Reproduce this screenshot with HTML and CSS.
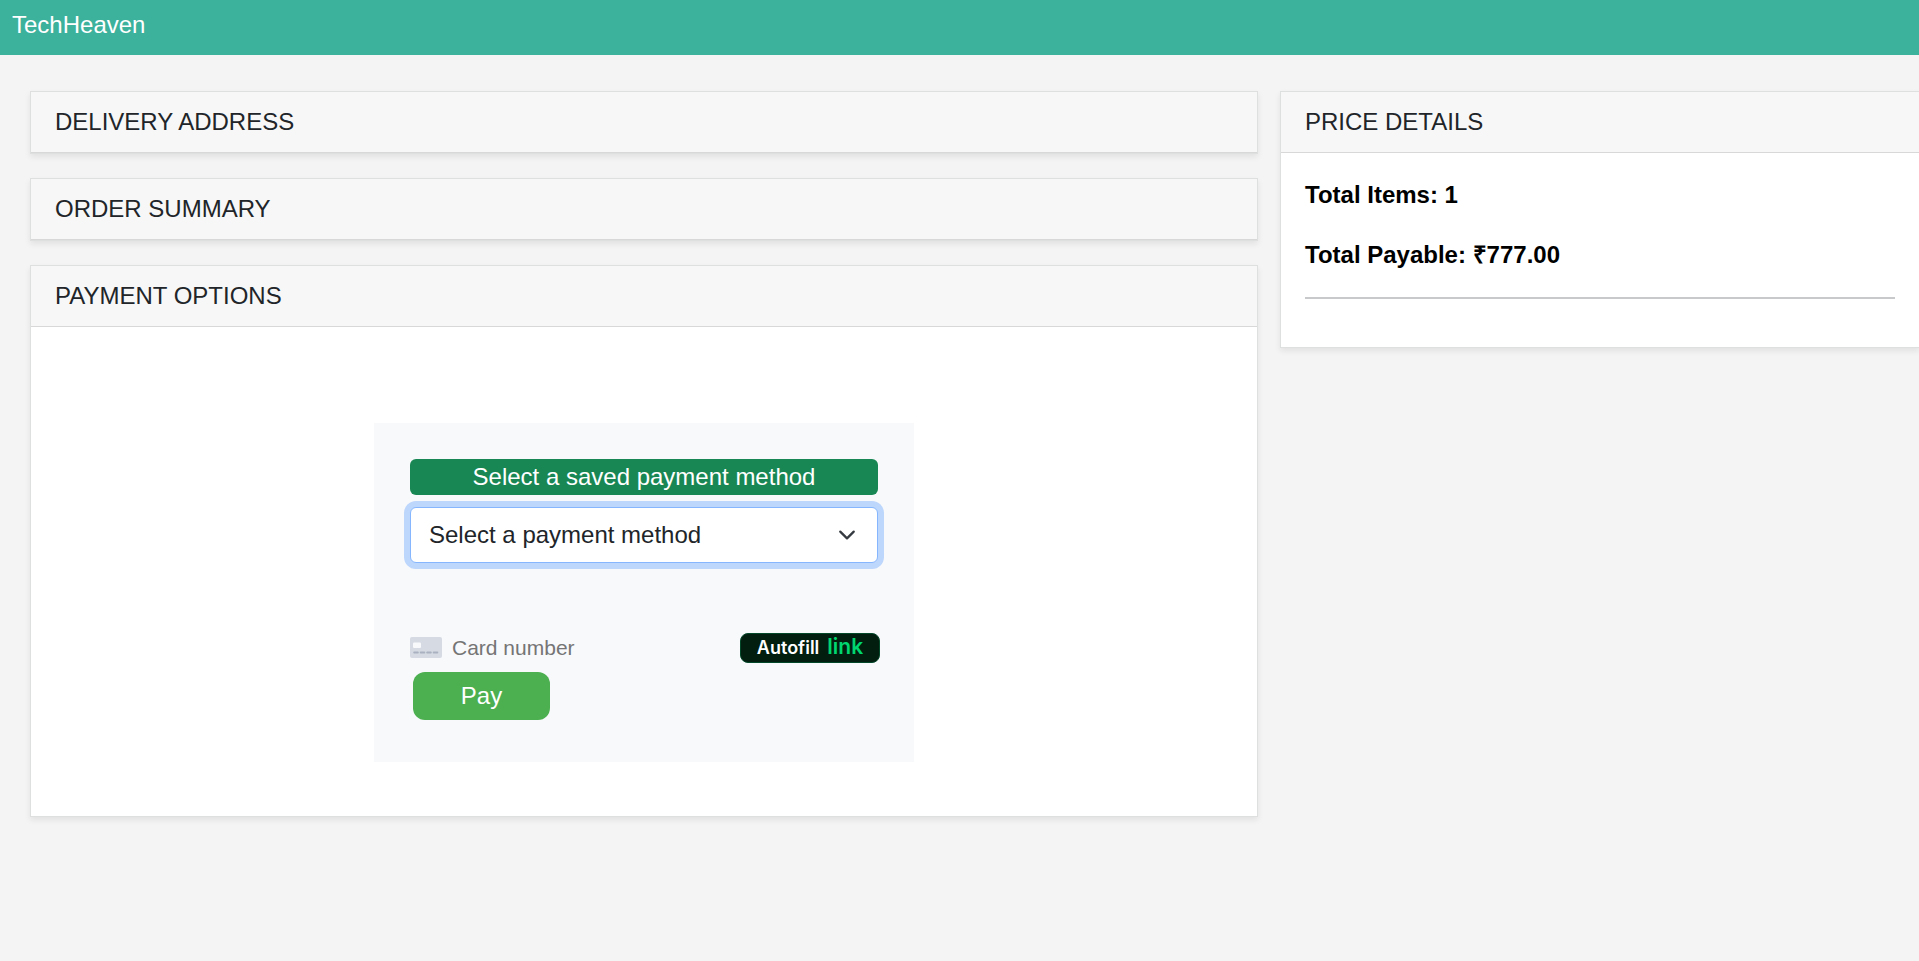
FILE: index.html
```html
<!DOCTYPE html>
<html lang="en">
<head>
<meta charset="utf-8">
<title>TechHeaven</title>
<meta name="viewport" content="width=device-width, initial-scale=1">
<link rel="stylesheet" href="styles.css">
</head>
<body>
<header class="navbar"><a class="brand" href="#">TechHeaven</a></header>
<main class="checkout">
  <div class="steps">
    <section class="card"><h2 class="card-header">DELIVERY ADDRESS</h2></section>
    <section class="card"><h2 class="card-header">ORDER SUMMARY</h2></section>
    <section class="card">
      <h2 class="card-header">PAYMENT OPTIONS</h2>
      <div class="payment-body">
        <form class="payment-form">
          <label class="badge" for="method">Select a saved payment method</label>
          <div class="select-wrap">
            <select class="select" id="method"><option>Select a payment method</option></select>
            <svg class="chevron" viewBox="0 0 16 16" aria-hidden="true"><path d="m2 5 6 6 6-6" fill="none" stroke="#343a40" stroke-width="2" stroke-linecap="round" stroke-linejoin="round"/></svg>
          </div>
          <div class="card-field">
            <svg class="card-icon" viewBox="0 0 32 22" aria-hidden="true">
              <rect width="32" height="21" rx="2" fill="#d6dae2"/>
              <rect x="3" y="5.500" width="8" height="5.500" rx="1" fill="#f8f9fb"/>
              <path d="M4.200 15.500h3.600M10.700 15.500h3.600M17.200 15.500h3.600M23.700 15.500h3.600" stroke="#aab2c1" stroke-width="2" stroke-linecap="round"/>
            </svg>
            <input class="card-input" type="text" placeholder="Card number" aria-label="Card number">
            <button class="autofill" type="button"><span>Autofill</span><span class="link-mark">link</span></button>
          </div>
          <button class="pay" type="button">Pay</button>
        </form>
      </div>
    </section>
  </div>
  <aside class="card">
    <h2 class="card-header">PRICE DETAILS</h2>
    <div class="price-body">
      <p class="price-line">Total Items: 1</p>
      <p class="price-line">Total Payable: ₹777.00</p>
      <hr class="divider">
    </div>
  </aside>
</main>
</body>
</html>
```

FILE: styles.css
```css
* { box-sizing: border-box; }
body {
  margin: 0;
  min-height: 100vh;
  background: #f4f4f4;
  color: #212529;
  font: 24px/36px "Liberation Sans", Arial, sans-serif;
  overflow-x: hidden;
}
.navbar {
  height: 55px;
  padding: 7px 12px;
  background: #3cb19c;
}
.brand { color: #fff; text-decoration: none; }
.checkout {
  display: grid;
  grid-template-columns: 1228fr 640fr;
  gap: 22px;
  align-items: start;
  margin: 36px -1px 36px 30px;
}
.steps {
  display: flex;
  flex-direction: column;
  gap: 24px;
}
.card {
  background: #fff;
  border: 1px solid #dedfdf;
  box-shadow: 0 3px 6px rgba(0, 0, 0, 0.08);
}
.card-header {
  margin: 0;
  padding: 12px 24px;
  background: #f7f7f7;
  border-bottom: 1px solid #d8d8d8;
  font-size: 24px;
  font-weight: 400;
}
.payment-body {
  display: flex;
  justify-content: center;
  padding: 96px 24px 54px;
}
.payment-form {
  width: 540px;
  max-width: 100%;
  padding: 36px 36px 42px;
  background: #f8f9fb;
}
.badge {
  display: block;
  margin-bottom: 12px;
  border-radius: 6px;
  background: #198754;
  color: #fff;
  text-align: center;
}
.select-wrap { position: relative; }
.select {
  display: block;
  width: 100%;
  height: 56px;
  padding: 0 54px 0 18px;
  border: 1px solid #86b7fe;
  border-radius: 6px;
  outline: 0;
  appearance: none;
  background: #fff;
  color: #212529;
  font: inherit;
  box-shadow: 0 0 0 6px #bdd6fb;
}
.chevron {
  position: absolute;
  top: 19px;
  right: 22px;
  width: 18px;
  height: 18px;
  pointer-events: none;
}
.card-field {
  display: flex;
  align-items: center;
  height: 30px;
  margin: 70px -2px 9px 0;
}
.card-icon {
  flex: none;
  width: 32px;
  height: 22px;
}
.card-input {
  flex: 1;
  min-width: 0;
  padding: 0;
  margin-left: 10px;
  border: 0;
  outline: 0;
  background: transparent;
  font: 21px/30px "Liberation Sans", Arial, sans-serif;
}
.card-input::placeholder { color: #757575; }
.autofill {
  display: flex;
  justify-content: center;
  align-items: center;
  gap: 8px;
  width: 140px;
  height: 30px;
  padding: 0;
  border: 1px solid #04482a;
  border-radius: 8px;
  background: #011e0f;
  color: #fff;
  font: 600 18px/28px Inter, "Open Sans", sans-serif;
}
.link-mark {
  padding-bottom: 2px;
  color: #00d66f;
  font: 600 21px/24px Inter, "Open Sans", sans-serif;
}
.pay {
  display: block;
  width: 137px;
  height: 48px;
  margin-left: 3px;
  padding: 0;
  border: 0;
  border-radius: 12px;
  background: #4caf50;
  color: #fff;
  font: inherit;
}
.price-body { padding: 24px 24px 48px; }
.price-line {
  margin: 0 0 24px;
  color: #000;
  font-weight: 700;
}
.divider {
  height: 2px;
  margin: 0;
  border: 0;
  background: #c8c9ca;
}
```
